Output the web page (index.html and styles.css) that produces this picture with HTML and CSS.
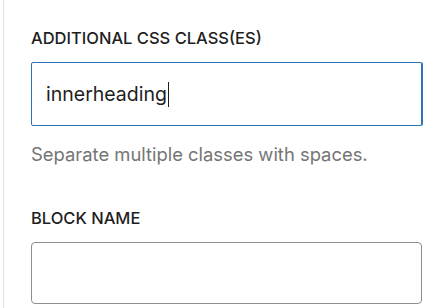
FILE: index.html
```html
<!DOCTYPE html>
<html lang="en">
<head>
    <meta charset="UTF-8">
    <meta name="viewport" content="width=device-width, initial-scale=1.0">
    <title>Advanced</title>
    <link rel="stylesheet" href="styles.css">
</head>
<body>
    <div class="panel">
        <div class="field">
            <label class="field-label" for="css-class">Additional CSS class(es)</label>
            <div class="text-input is-focused" id="css-class">innerheading<span class="caret"></span></div>
            <p class="help">Separate multiple classes with spaces.</p>
        </div>
        <div class="field">
            <label class="field-label" for="block-name">Block name</label>
            <div class="text-input" id="block-name"></div>
        </div>
    </div>
</body>
</html>
```

FILE: styles.css
```css
body {
    margin: 0;
    background: #fff;
    font-family: Inter, "Noto Sans", sans-serif;
    color: #1e1e1e;
}
.panel {
    margin-left: 3px;
    border-left: 1px solid #e0e0e0;
    padding: 26px 22px 0 27px;
    height: 308px;
    box-sizing: border-box;
}
.field {
    margin-bottom: 40px;
}
.field-label {
    display: block;
    font-size: 16.5px;
    font-weight: 450;
    text-transform: uppercase;
    line-height: 24px;
    margin-bottom: 12px;
}
.text-input {
    height: 62px;
    box-sizing: border-box;
    border: 1px solid #8c8f94;
    border-radius: 4px;
    padding: 0 14px;
    font-size: 19.5px;
    line-height: 60px;
    color: #1e1e1e;
    display: flex;
    align-items: center;
}
.text-input.is-focused {
    height: 64px;
    border-color: #2f73b4;
    border-radius: 2px;
    box-shadow: 1px 0 0 #2f73b4;
}
.caret {
    display: inline-block;
    width: 1px;
    height: 25px;
    background: #1e1e1e;
    margin-left: 1px;
}
.help {
    margin: 16px 0 0;
    font-size: 18.4px;
    line-height: 24px;
    color: #757575;
}
```
